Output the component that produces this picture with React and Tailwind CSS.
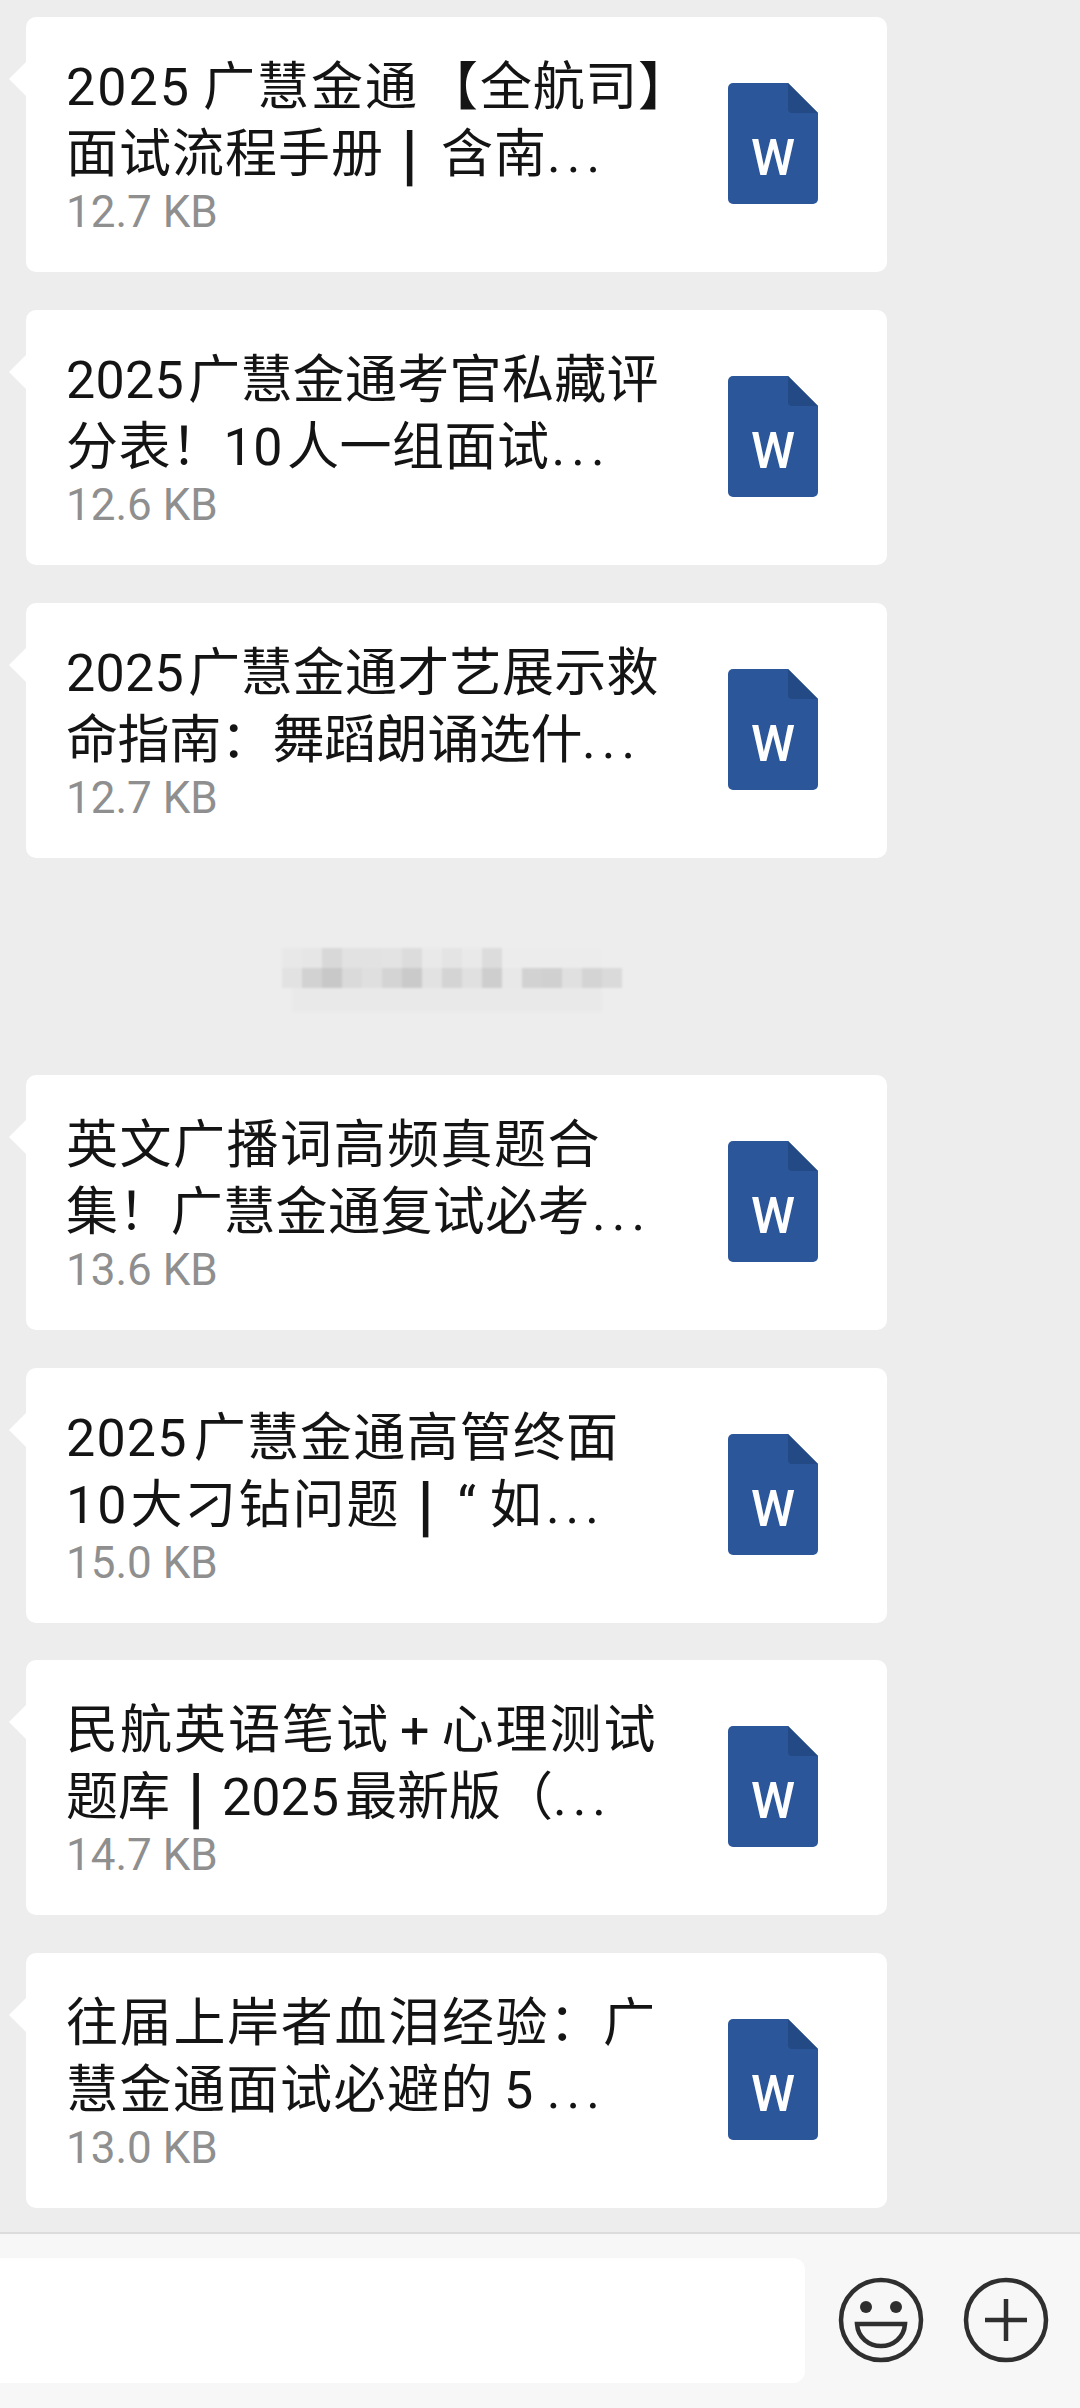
const Bar = () => <span className="inline-block w-[52px] text-center text-[66px] leading-none align-[-6px] font-bold font-['Roboto',sans-serif]">|</span>;
const Dots = ({ className = "" }) => <span className={`tracking-[6px] ${className}`}>...</span>;

const groupA = [
  {
    size: "12.7 KB",
    l1: <span className="tracking-[2px]"><span className="mr-[12px]">2025</span>广慧金通<span className="ml-[7px]">【</span><span className="tracking-[0.7px]">全航司】</span></span>,
    l2: <span className="tracking-[1px]">面试流程手册<Bar /><span className="ml-[5px]">含南</span><Dots /></span>,
  },
  {
    size: "12.6 KB",
    l1: <span className="tracking-[0.3px]"><span className="mr-[4px]">2025</span>广慧金通考官私藏评</span>,
    l2: <span className="tracking-[0.5px]">分表！<span className="mr-[4px]">10</span>人一组面试<Dots className="ml-[2px]" /></span>,
  },
  {
    size: "12.7 KB",
    l1: <span className="tracking-[0.3px]"><span className="mr-[4px]">2025</span>广慧金通才艺展示救</span>,
    l2: <span className="tracking-[-0.4px]">命指南：舞蹈朗诵选什<Dots /></span>,
  },
];
const groupB = [
  {
    size: "13.6 KB",
    l1: <span className="tracking-[1.5px]">英文广播词高频真题合</span>,
    l2: <span className="tracking-[0.4px]">集！广慧金通复试必考<Dots className="ml-[2px]" /></span>,
  },
  {
    size: "15.0 KB",
    l1: <span className="tracking-[1.2px]"><span className="mr-[6px]">2025</span>广慧金通高管终面</span>,
    l2: <span className="tracking-[2px]"><span className="mr-[2px]">10</span>大刁钻问题<Bar /><span className="ml-[5px] mr-[12px]">“</span>如<Dots className="ml-[2px]" /></span>,
  },
  {
    size: "14.7 KB",
    l1: <span className="tracking-[2px]">民航英语笔试<span className="mx-[10px]">+</span>心理测试</span>,
    l2: <span>题库<Bar /><span className="mr-[6px]">2025</span>最新版（<Dots /></span>,
  },
  {
    size: "13.0 KB",
    l1: <span className="tracking-[1.7px]">往届上岸者血泪经验：广</span>,
    l2: <span className="tracking-[1.5px]">慧金通面试必避的<span className="ml-[10px]">5</span><Dots className="ml-[12px]" /></span>,
  },
];

const top = ["#e8e8e8","#e6e6e6","#d8d8d8","#e2e2e2","#e2e2e2","#e3e3e3","#dcdcdc","#e9e9e9","#e4e4e4","#e9e9e9","#dcdcdc","#ececec","#ececec","#ececec","#ececec","#ececec","#ededed"];
const bottom = ["#e2e2e2","#d2d2d2","#c8c8c8","#dadada","#dfdfdf","#d4d4d4","#cacaca","#e2e2e2","#d4d4d4","#e0e0e0","#cecece","#e8e8e8","#d2d2d2","#d0d0d0","#e0e0e0","#d4d4d4","#dadada"];

function WordIcon() {
  return (
    <svg width="90" height="121" viewBox="0 0 90 121" className="shrink-0">
      <path d="M5 0H60L90 30V116a5 5 0 0 1-5 5H5a5 5 0 0 1-5-5V5a5 5 0 0 1 5-5Z" fill="#2b579a" />
      <path d="M60 0L90 30H64a4 4 0 0 1-4-4Z" fill="#234a85" />
      <text x="45" y="92" textAnchor="middle" fill="#ffffff" fontSize="50" fontWeight="500" fontFamily="Roboto, sans-serif">W</text>
    </svg>
  );
}

function Card({ item }) {
  return (
    <div className="relative w-[861px] h-[255px] bg-white rounded-[10px] flex items-start justify-between pl-[40px] pr-[69px]">
      <div className="absolute left-[-17px] top-[45px] w-0 h-0 border-y-[17px] border-y-transparent border-r-[17px] border-r-white" />
      <div className="pt-[37px] w-[620px]">
        <div className="h-[67px] text-[52px] leading-[67px] text-[#141414] whitespace-nowrap">{item.l1}</div>
        <div className="h-[67px] text-[52px] leading-[67px] text-[#141414] whitespace-nowrap">{item.l2}</div>
        <div className="text-[44px] leading-[45px] mt-[2px] text-[#8f8f8f]">{item.size}</div>
      </div>
      <div className="pt-[66px]">
        <WordIcon />
      </div>
    </div>
  );
}

function Mosaic() {
  return (
    <div className="h-[217px] flex flex-col items-start pt-[90px] pl-[256px] blur-[1px]">
      <div className="flex">
        {top.map((c, i) => <div key={i} className="w-[20px] h-[20px]" style={{ backgroundColor: c }} />)}
      </div>
      <div className="flex">
        {bottom.map((c, i) => <div key={i} className="w-[20px] h-[20px]" style={{ backgroundColor: c }} />)}
      </div>
      <div className="h-[24px] w-[310px] ml-[10px] bg-[#e9e9e9]" />
    </div>
  );
}

export default function App() {
  return (
    <div className="w-[1080px] h-[2408px] bg-[#ededed] flex flex-col overflow-hidden font-['Roboto','Noto_Sans_CJK_SC',sans-serif]">
      <div className="flex-1 pt-[17px] pl-[26px] flex flex-col">
        <div className="flex flex-col gap-[38px]">
          {groupA.map((it, i) => <Card key={i} item={it} />)}
        </div>
        <Mosaic />
        <div className="flex flex-col gap-[37.5px]">
          {groupB.map((it, i) => <Card key={i} item={it} />)}
        </div>
      </div>
      <div className="h-[176px] bg-[#f7f7f7] border-t-2 border-[#dcdcdc] flex items-start pt-[24px] shrink-0">
        <div className="w-[805px] h-[125px] bg-white rounded-r-[12px]" />
        <svg width="90" height="90" viewBox="0 0 90 90" className="ml-[31px] mt-[17px]" fill="none" stroke="#2f2f2f" strokeWidth="4.5">
          <circle cx="45" cy="45" r="40" />
          <circle cx="30" cy="32" r="6" fill="#2f2f2f" stroke="none" />
          <circle cx="60" cy="32" r="6" fill="#2f2f2f" stroke="none" />
          <path d="M21 49H69C68 63 57 71 45 71C33 71 22 63 21 49Z" />
        </svg>
        <svg width="90" height="90" viewBox="0 0 90 90" className="ml-[35px] mt-[17px]" fill="none" stroke="#2f2f2f" strokeWidth="4.5">
          <circle cx="45" cy="45" r="40" />
          <path d="M45 24V66M24 45H66" />
        </svg>
      </div>
    </div>
  );
}
